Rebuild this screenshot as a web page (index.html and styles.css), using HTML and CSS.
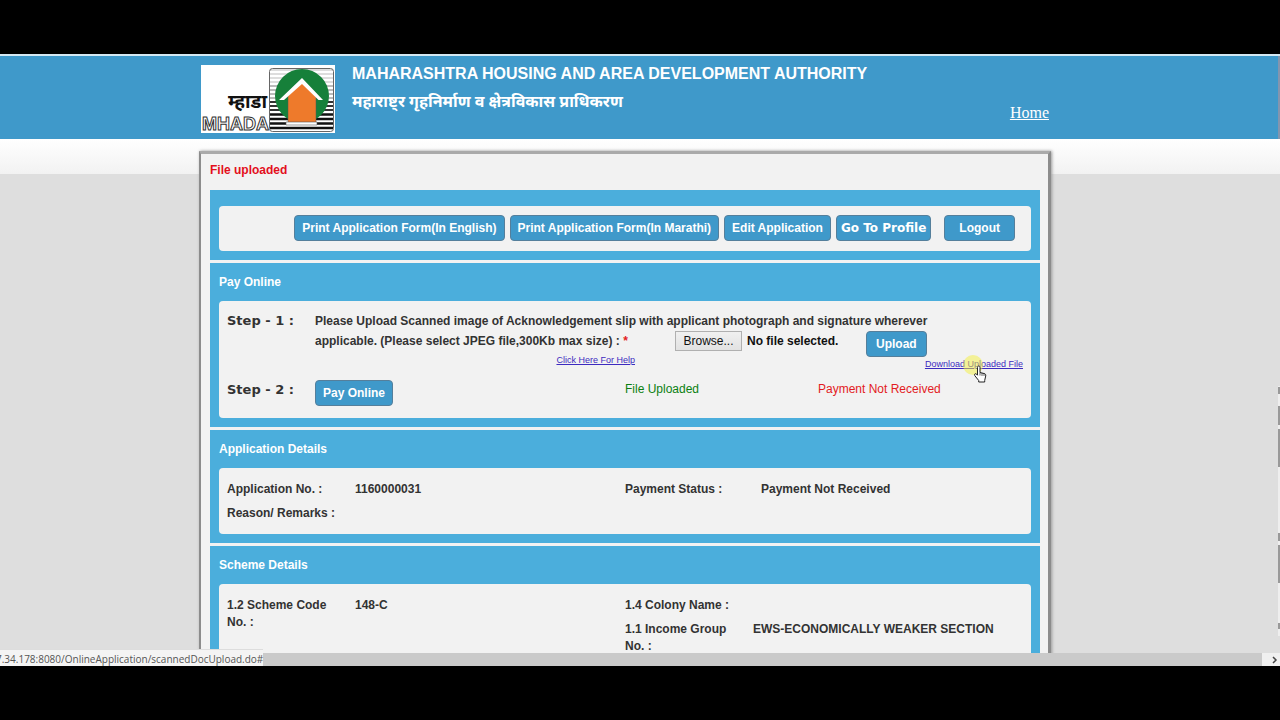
FILE: index.html
```
<!DOCTYPE html>
<html lang="en">
<head>
<meta charset="utf-8">
<title>MHADA Online Application</title>
<link rel="stylesheet" href="styles.css">
</head>
<body>
<div class="viewport">
  <div class="page">
    <header class="header">
      <div class="wrap header-inner">
        <svg class="logo" width="134" height="68" viewBox="0 0 134 68" role="img" aria-label="MHADA">
          <rect width="134" height="68" fill="#fff"/>
          <path d="M69 5H132M69 9H132M69 13H132M69 17H132" stroke="#bbb" stroke-width="1"/>
          <path d="M69 21H132M69 25H132M69 29H132M69 33H132" stroke="#777" stroke-width="1"/>
          <path d="M69 37H132M69 41H132M69 45H132" stroke="#333" stroke-width="2"/>
          <path d="M69 49.500H132M69 54H132M69 58.500H132M69 63H132" stroke="#111" stroke-width="2.500"/>
          <rect x="68.500" y="3.500" width="64" height="63" rx="3" fill="none" stroke="#666"/>
          <circle cx="101" cy="31" r="27" fill="#16803a"/>
          <path d="M101 17L115 31V59H87V31Z" fill="#ee7a2b" stroke="#555" stroke-width=".5"/>
          <path d="M85 57H116V60H85Z" fill="#fff" stroke="#555" stroke-width=".6"/>
          <path d="M78 35L101 13L122 35H117.500L101 19L83 35Z" fill="#fff"/>
          <text class="logo-hi" x="27" y="43">म्हाडा</text>
          <text class="logo-en" x="1" y="65">MHADA</text>
        </svg>
        <div class="titles">
          <h1>MAHARASHTRA HOUSING AND AREA DEVELOPMENT AUTHORITY</h1>
          <p class="hindi" lang="mr">महाराष्ट्र गृहनिर्माण व क्षेत्रविकास प्राधिकरण</p>
        </div>
        <a class="home" href="#">Home</a>
      </div>
    </header>
    <main class="main">
      <div class="wrap panel">
        <p class="message">File uploaded</p>
        <section class="section toolbar">
          <div class="box actions">
            <button class="btn" type="button">Print Application Form(In English)</button>
            <button class="btn" type="button">Print Application Form(In Marathi)</button>
            <button class="btn" type="button">Edit Application</button>
            <button class="btn profile" type="button">Go To Profile</button>
            <button class="btn logout" type="button">Logout</button>
          </div>
        </section>
        <section class="section">
          <h2>Pay Online</h2>
          <div class="box pay">
            <div class="step">
              <strong class="step-name">Step - 1 :</strong>
              <div class="step-body">
                <p class="instruction">Please Upload Scanned image of Acknowledgement slip with applicant photograph and signature wherever</p>
                <div class="upload-row">
                  <div class="upload-text">
                    <p class="instruction">applicable. (Please select JPEG file,300Kb max size) : <span class="required">*</span></p>
                    <a class="small-link" href="#">Click Here For Help</a>
                  </div>
                  <div class="file">
                    <button class="browse" type="button">Browse...</button>
                    <span>No file selected.</span>
                    <input type="file" accept="image/jpeg" aria-label="Scanned acknowledgement slip" hidden>
                  </div>
                  <div class="upload-action">
                    <button class="btn" type="button">Upload</button>
                    <a class="small-link download" href="#">Download Uploaded File<svg class="cursor" width="30" height="30" viewBox="0 0 30 30" aria-hidden="true"><circle cx="10" cy="10" r="10" fill="#f4ef3c" opacity=".5"/><path d="M14.500 12.500c0-2 2.500-2 2.500 0v5l4 1c1.500.4 2 1 1.700 2.500l-1 4.500v1.500h-6v-1.500l-4-5c-.8-1.500.8-2.400 2-1.200l.8.900z" fill="#fff" stroke="#222"/><path d="M17 17.500v3M19 18v3M21 18.500v2.500" stroke="#222" stroke-width=".7"/></svg></a>
                  </div>
                </div>
              </div>
            </div>
            <div class="step step-two">
              <strong class="step-name">Step - 2 :</strong>
              <div class="step-body pay-row">
                <div><button class="btn" type="button">Pay Online</button></div>
                <span class="ok">File Uploaded</span>
                <span class="fail">Payment Not Received</span>
              </div>
            </div>
          </div>
        </section>
        <section class="section">
          <h2>Application Details</h2>
          <div class="box details">
            <dl>
              <dt>Application No. :</dt><dd>1160000031</dd>
              <dt>Reason/ Remarks :</dt><dd></dd>
            </dl>
            <dl class="wide">
              <dt>Payment Status :</dt><dd>Payment Not Received</dd>
            </dl>
          </div>
        </section>
        <section class="section">
          <h2>Scheme Details</h2>
          <div class="box details">
            <dl>
              <dt>1.2 Scheme Code No. :</dt><dd>148-C</dd>
            </dl>
            <dl>
              <dt>1.4 Colony Name :</dt><dd></dd>
              <dt>1.1 Income Group No. :</dt><dd>EWS-ECONOMICALLY WEAKER SECTION</dd>
            </dl>
          </div>
        </section>
      </div>
    </main>
  </div>
  <div class="scrollbar"><div class="thumb"></div><svg width="18" height="13" viewBox="0 0 18 13" aria-hidden="true"><path d="M11 4l3 3-3 3" fill="none" stroke="#444" stroke-width="1.500"/></svg></div>
  <div class="edge"></div>
  <svg class="edge-marks" width="2" height="250" viewBox="0 0 2 250" aria-hidden="true"><path d="M0 0H2V250H0Z" fill="#eee"/><path d="M1 1V8M1 20V39M1 43V81M1 147V155M1 159V197M1 237V243" stroke="#999" stroke-width="2"/></svg>
  <div class="status">7.34.178:8080/OnlineApplication/scannedDocUpload.do#</div>
</div>
</body>
</html>
```
FILE: styles.css
```
* { box-sizing: border-box; }
body {
  margin: 0;
  height: 100vh;
  padding: 54px 0;
  background: #000;
  color: #333;
  font: bold 12px/17px "Liberation Sans", Arial, sans-serif;
}
h1, h2, p, dl, dd { margin: 0; }
.viewport {
  position: relative;
  display: flex;
  flex-direction: column;
  height: 100%;
  overflow: hidden;
  background: #dedede;
}
.page { flex: 1; min-height: 0; overflow: hidden; }
.wrap { width: 100%; max-width: 852px; margin: 0 auto; }
.header {
  border-top: 2px solid #d5e9f3;
  padding-right: 30px;
  background: #3f99ca;
  color: #fff;
}
.header-inner { display: flex; height: 83px; padding: 9px 2px 6px; }
.logo { flex: none; }
.logo-hi { font: bold 19px "Noto Sans Devanagari", "Noto Sans", sans-serif; fill: #111; }
.logo-en { font: bold 18px "Liberation Sans", Arial, sans-serif; fill: #fff; stroke: #333; stroke-width: 1px; }
.titles { flex: 1; margin-left: 17px; }
h1 { font-size: 16px; line-height: 18px; }
.hindi { margin-top: 9px; font: bold 16px/24px "Noto Sans Devanagari", "Noto Sans", sans-serif; }
.home { align-self: flex-end; margin-bottom: 10px; color: #fff; font: 16px/20px "Liberation Serif", "Times New Roman", serif; }
.main {
  padding: 12px 30px 0 0;
  background: linear-gradient(#fff, #f2f2f2) top / 100% 35px no-repeat;
}
.panel {
  padding: 8px 8px 8px 9px;
  border: solid #8c8c8c;
  border-width: 3px 3px 0 2px;
  border-top-color: #aaa;
  background: #f2f2f2;
  box-shadow: 1px 0 3px #999;
}
.message { margin-bottom: 11px; color: #e30f1c; }
.section { padding: 0 9px 9px; background: #4baedc; }
.section + .section { margin-top: 3px; }
.toolbar { padding-top: 16px; }
h2 { color: #fff; font-size: 12px; line-height: 38px; }
.box { border-radius: 4px; background: #f2f2f2; }
.btn {
  height: 26px;
  padding: 0 7px;
  border: 1px solid #557f9b;
  border-radius: 4px;
  background: #3f99ca;
  color: #fff;
  font: inherit;
  white-space: nowrap;
}
.actions { display: flex; justify-content: flex-end; gap: 5px; padding: 9px 16px 10px; }
.profile { padding: 0 4px; font-family: "DejaVu Sans", Verdana, sans-serif; }
.logout { margin-left: 8px; padding: 0 14px; }
.pay { padding: 10px 8px 12px; }
.step { display: flex; }
.step-two { margin-top: 9px; }
.step-name { flex: none; width: 88px; font: bold 13px/20px "DejaVu Sans", Verdana, sans-serif; }
.step-body { flex: 1; }
.instruction { line-height: 20px; white-space: nowrap; }
.upload-row { display: flex; }
.upload-text { width: 320px; text-align: right; }
.upload-text .instruction { text-align: left; }
.required { color: #e31b23; }
.small-link { color: #3d2bc0; font-size: 9px; font-weight: normal; line-height: 18px; display: block; }
.file { display: flex; align-items: center; gap: 5px; width: 191px; height: 20px; margin-left: 40px; color: #111; }
.browse {
  width: 67px;
  height: 20px;
  padding: 0;
  border: 1px solid #b0b0b0;
  background: linear-gradient(#f0f0f0, #e2e2e2);
  color: #111;
  font: 12px/17px "Liberation Sans", Arial, sans-serif;
}
.upload-action { flex: 1; text-align: right; }
.upload-action .btn { display: block; padding: 0 9px; }
.download { position: relative; line-height: 14px; }
.cursor { position: absolute; right: 30px; top: -2px; }
.pay-row { display: grid; grid-template-columns: 310px 193px 1fr; font-weight: normal; line-height: 19px; }
.pay-row .btn { font-weight: bold; }
.ok { color: #0b8011; }
.fail { color: #e31b23; }
.details { display: grid; grid-template-columns: 398px 1fr; padding: 13px 8px 12px; }
.details dl { display: grid; grid-template-columns: 112px 1fr; gap: 7px 16px; align-content: start; }
.details .wide { grid-template-columns: 120px 1fr; }
.scrollbar { display: flex; height: 13px; background: #f0f0f0; }
.thumb { flex: 1; background: #cacaca; }
.edge { position: absolute; top: 2px; right: 0; width: 2px; height: 83px; background: #8395ae; }
.edge-marks { position: absolute; top: 332px; right: 0; }
.status {
  position: absolute;
  left: 0;
  bottom: 0;
  height: 17px;
  border-top: 1px solid #ddd;
  background: #f4f4f4;
  color: #555;
  font: 10px/18px "Open Sans", "Noto Sans", sans-serif;
  text-indent: -4px;
}
```
